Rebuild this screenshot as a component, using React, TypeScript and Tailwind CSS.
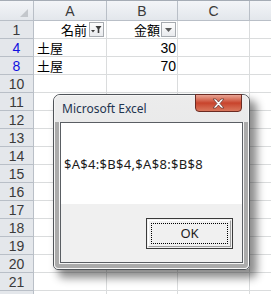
import React from "react";

const font = { fontFamily: '"Liberation Sans", "Noto Sans CJK JP", sans-serif' };
const jp = { fontFamily: '"Noto Sans CJK JP", sans-serif' };
const ui = { fontFamily: '"Noto Sans", "Open Sans", sans-serif' };

const rows = [
  { n: "1", blue: false, a: "名前", b: "金額", head: true },
  { n: "4", blue: true, a: "土屋", b: "30" },
  { n: "8", blue: true, a: "土屋", b: "70" },
  ...["10", "11", "12", "13", "14", "15", "16", "17", "18", "19", "20", "21", ""].map((n) => ({
    n,
    blue: false,
    a: "",
    b: "",
  })),
];

function FilterButton({ active }: { active?: boolean }) {
  return (
    <div className="w-[15px] h-[15px] border border-[#a7abb0] bg-gradient-to-b from-[#fdfdfd] to-[#e9ebee] flex items-center justify-center shrink-0">
      {active ? (
        <svg width="11" height="9" viewBox="0 0 11 9">
          <path d="M0 5h4l-2 2.5z" fill="#3c3c3c" />
          <path d="M4.5 1h6l-2.2 3v4h-1.6v-4z" fill="#3c3c3c" />
        </svg>
      ) : (
        <svg width="7" height="4" viewBox="0 0 7 4">
          <path d="M0 0h7l-3.5 4z" fill="#5a5a5a" />
        </svg>
      )}
    </div>
  );
}

export default function App() {
  return (
    <div className="relative w-[271px] h-[294px] overflow-hidden bg-white select-none leading-none" style={font}>
      {/* column headers */}
      <div className="flex h-[21px] border-t border-[#a5acb5] bg-gradient-to-b from-[#f3f5f8] to-[#e2e6eb] text-[14px] text-[#3a3a3a]">
        <div className="w-[34px] h-full border-r border-b border-[#b9bfc7] flex items-end justify-end pr-[5px] pb-[3px]">
          <svg width="8" height="8" viewBox="0 0 8 8">
            <path d="M8 0v8H0z" fill="#c3c7cc" />
          </svg>
        </div>
        <div className="w-[73px] h-full border-r border-b border-[#b9bfc7] flex items-center justify-center">A</div>
        <div className="w-[71px] h-full border-r border-b border-[#b9bfc7] flex items-center justify-center">B</div>
        <div className="w-[72px] h-full border-r border-b border-[#b9bfc7] flex items-center justify-center">C</div>
        <div className="flex-1 h-full border-b border-[#b9bfc7]" />
      </div>

      {/* rows */}
      {rows.map((r, i) => (
        <div key={i} className="flex h-[18px]">
          <div
            className={`w-[34px] h-full border-r border-b border-[#b9bfc7] bg-[#e4e7eb] flex items-center justify-center text-[14px] ${
              r.blue ? "text-[#1010e0]" : "text-[#3a3a3a]"
            }`}
          >
            {r.n}
          </div>
          <div className="w-[73px] h-full border-r border-b border-[#dadcdd] flex items-center text-[13px] text-black overflow-hidden">
            {r.head ? (
              <div className="flex w-full items-center justify-end pr-[2px] gap-[2px]">
                <span style={jp}>{r.a}</span>
                <FilterButton active />
              </div>
            ) : (
              <span className="pl-[3px]" style={jp}>
                {r.a}
              </span>
            )}
          </div>
          <div className="w-[71px] h-full border-r border-b border-[#dadcdd] flex items-center justify-end text-[14px] text-black overflow-hidden">
            {r.head ? (
              <div className="flex w-full items-center justify-end pr-[1px] gap-[1px] text-[13px]">
                <span style={jp}>{r.b}</span>
                <FilterButton />
              </div>
            ) : (
              <span className="pr-[1px]">{r.b}</span>
            )}
          </div>
          <div className="w-[72px] h-full border-r border-b border-[#dadcdd]" />
          <div className="flex-1 h-full border-b border-[#dadcdd]" />
        </div>
      ))}

      {/* message box */}
      <div className="absolute left-[53px] top-[94px] w-[197px] h-[176px] rounded-t-[7px] rounded-b-[5px] border border-[#4f5358] bg-gradient-to-b from-[#ececec] to-[#dedfe1] shadow-[6px_7px_9px_1px_rgba(0,0,0,0.45)] flex flex-col">
        <div className="absolute inset-0 rounded-t-[6px] rounded-b-[4px] border border-[#f6f6f6] pointer-events-none" />
        <div className="relative h-[27px] flex items-center pl-[8px] pt-[1px] text-[12px] text-[#1f3550]" style={ui}>
          Microsoft Excel
          <div className="absolute right-[7px] top-[-1px] w-[47px] h-[18px] rounded-b-[4px] border border-[#6b2a22] bg-gradient-to-b from-[#e8a494] via-[#c8432c] to-[#d9765c] flex items-center justify-center">
            <svg width="15" height="11" viewBox="0 0 15 11">
              <path
                d="M2 1h3l2.5 3 2.5-3h3l-4 4.5 4 4.5h-3l-2.5-3-2.5 3h-3l4-4.5z"
                fill="#fff"
                stroke="#6a3a34"
                strokeWidth="0.8"
              />
            </svg>
          </div>
        </div>
        <div className="mx-[1px] mb-[1px] flex-1 flex border-x-[4px] border-b-[4px] border-[#ababab] rounded-b-[3px]">
          <div className="flex-1 flex px-[1px] pb-[1px] bg-[#f4f4f4]">
            <div className="flex-1 border border-[#5a5e63] flex flex-col">
              <div className="h-[81px] bg-white flex items-center pl-[3px] pt-[2px] text-[13px] tracking-[0.3px] text-[#1b1b1b]" style={ui}>
                $A$4:$B$4,$A$8:$B$8
              </div>
              <div className="flex-1 bg-[#f0f0f0] flex justify-end pr-[9px] pt-[14px]">
                <div className="w-[87px] h-[31px] border border-[#3a3a3a] bg-[#f0f0f0] p-[1px]">
                  <div className="w-full h-full border border-t-white border-l-white border-r-[#a0a0a0] border-b-[#a0a0a0] p-[2px]">
                    <div className="w-full h-full border border-dotted border-black flex items-center justify-center text-[13px] text-[#1b1b1b]" style={ui}>
                      OK
                    </div>
                  </div>
                </div>
              </div>
            </div>
          </div>
        </div>
      </div>
    </div>
  );
}
